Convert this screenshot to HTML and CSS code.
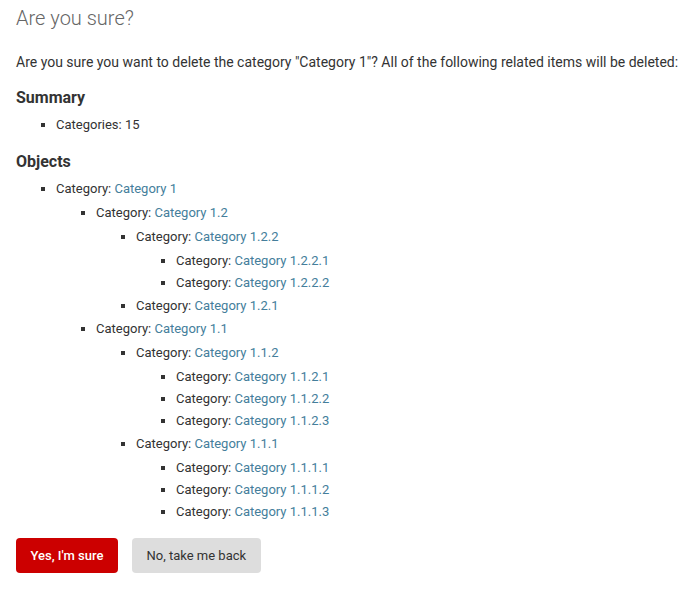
FILE: index.html
```html
<!DOCTYPE html>
<html>
<head>
<meta charset="utf-8">
<link rel="stylesheet" href="styles.css">
</head>
<body>
<div class="content">
  <h1 class="title">Are you sure?</h1>
  <p class="intro">Are you sure you want to delete the category "Category 1"? All of the following related items will be deleted:</p>
  <h2 class="section">Summary</h2>
  <ul class="list">
    <li>Categories: 15</li>
  </ul>
  <h2 class="section">Objects</h2>
  <ul class="list">
    <li>Category: <a href="#">Category 1</a>
      <ul class="list">
        <li>Category: <a href="#">Category 1.2</a>
          <ul class="list">
            <li>Category: <a href="#">Category 1.2.2</a>
              <ul class="list">
                <li>Category: <a href="#">Category 1.2.2.1</a></li>
                <li>Category: <a href="#">Category 1.2.2.2</a></li>
              </ul>
            </li>
            <li>Category: <a href="#">Category 1.2.1</a></li>
          </ul>
        </li>
        <li>Category: <a href="#">Category 1.1</a>
          <ul class="list">
            <li>Category: <a href="#">Category 1.1.2</a>
              <ul class="list">
                <li>Category: <a href="#">Category 1.1.2.1</a></li>
                <li>Category: <a href="#">Category 1.1.2.2</a></li>
                <li>Category: <a href="#">Category 1.1.2.3</a></li>
              </ul>
            </li>
            <li>Category: <a href="#">Category 1.1.1</a>
              <ul class="list">
                <li>Category: <a href="#">Category 1.1.1.1</a></li>
                <li>Category: <a href="#">Category 1.1.1.2</a></li>
                <li>Category: <a href="#">Category 1.1.1.3</a></li>
              </ul>
            </li>
          </ul>
        </li>
      </ul>
    </li>
  </ul>
  <div class="actions">
    <button class="btn btn-danger">Yes, I'm sure</button>
    <button class="btn btn-cancel">No, take me back</button>
  </div>
</div>
</body>
</html>
```
FILE: styles.css
```css
html, body {
  margin: 0;
  padding: 0;
  background: #fff;
}
body {
  font-family: Roboto, "Liberation Sans", sans-serif;
  font-size: 14px;
  color: #333;
}
.content {
  padding: 4px 16px 20px 16px;
}
.title {
  margin: 0;
  font-size: 20px;
  font-weight: 300;
  color: #666;
  line-height: 28px;
}
.intro {
  margin: 20px 0 15px 0;
  font-size: 14px;
  line-height: 20px;
}
.section {
  margin: 13px 0 0 0;
  font-size: 16px;
  font-weight: 700;
  line-height: 21px;
}
.list {
  margin: 7px 0 0 0;
  padding: 0 0 1px 40px;
}
.list .list {
  margin: 4px 0 3px 0;
  padding-bottom: 0;
}
.list li {
  list-style-type: square;
  font-size: 13px;
  line-height: 20px;
  margin: 0 0 2px 0;
  padding: 0;
}
a {
  color: #447e9b;
  text-decoration: none;
}
.actions {
  display: flex;
  gap: 14px;
  margin-top: 12px;
}
.btn {
  font-family: Roboto, "Liberation Sans", sans-serif;
  font-size: 13px;
  border: none;
  border-radius: 4px;
  height: 35px;
  padding: 0 14.5px;
  cursor: pointer;
}
.btn-danger {
  background: #cc0000;
  color: #fff;
  font-weight: 500;
}
.btn-cancel {
  background: #ddd;
  color: #333;
}
```
